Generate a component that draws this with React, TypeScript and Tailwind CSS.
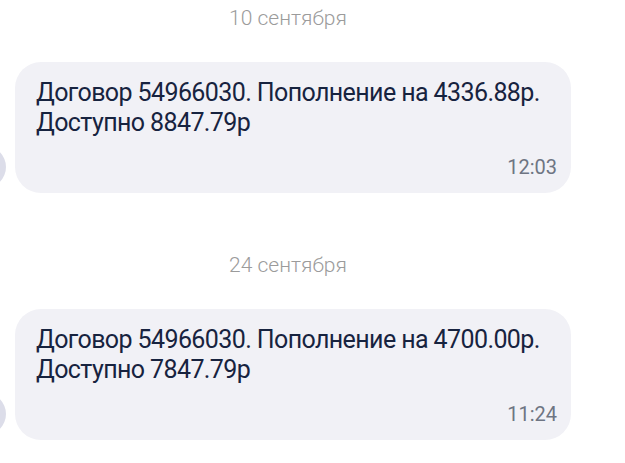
import React from "react";

type Message = {
  date: string;
  text: string[];
  time: string;
};

const messages: Message[] = [
  {
    date: "10 сентября",
    text: ["Договор 54966030. Пополнение на 4336.88р.", "Доступно 8847.79р"],
    time: "12:03",
  },
  {
    date: "24 сентября",
    text: ["Договор 54966030. Пополнение на 4700.00р.", "Доступно 7847.79р"],
    time: "11:24",
  },
];

const Bubble: React.FC<{ message: Message }> = ({ message }) => (
  <div className="relative">
    <div className="absolute left-[-36px] bottom-[5px] w-[42px] h-[42px] rounded-full bg-[#dcdde9]" />
    <div className="ml-[15px] w-[556px] h-[131px] rounded-[26px] bg-[#f1f1f6] pl-[21px] pr-[14px] pt-[16px] flex flex-col">
      <p className="text-[25px] leading-[30px] tracking-[-0.6px] text-[#17233f]">
        {message.text[0]}
        <br />
        {message.text[1]}
      </p>
      <span className="mt-auto mb-[14px] self-end text-[20px] leading-[24px] text-[#6e7583]">
        {message.time}
      </span>
    </div>
  </div>
);

export default function App() {
  return (
    <div
      className="w-[625px] h-[463px] bg-white overflow-hidden"
      style={{ fontFamily: "Roboto, 'Noto Sans', sans-serif" }}
    >
      {messages.map((m, i) => (
        <section key={m.time} className={i === 0 ? "pt-[5px]" : "pt-[59px]"}>
          <div className="w-[576px] text-center text-[21px] leading-[26px] font-light text-[#9b9b9b]">
            {m.date}
          </div>
          <div className="mt-[31px]">
            <Bubble message={m} />
          </div>
        </section>
      ))}
    </div>
  );
}
